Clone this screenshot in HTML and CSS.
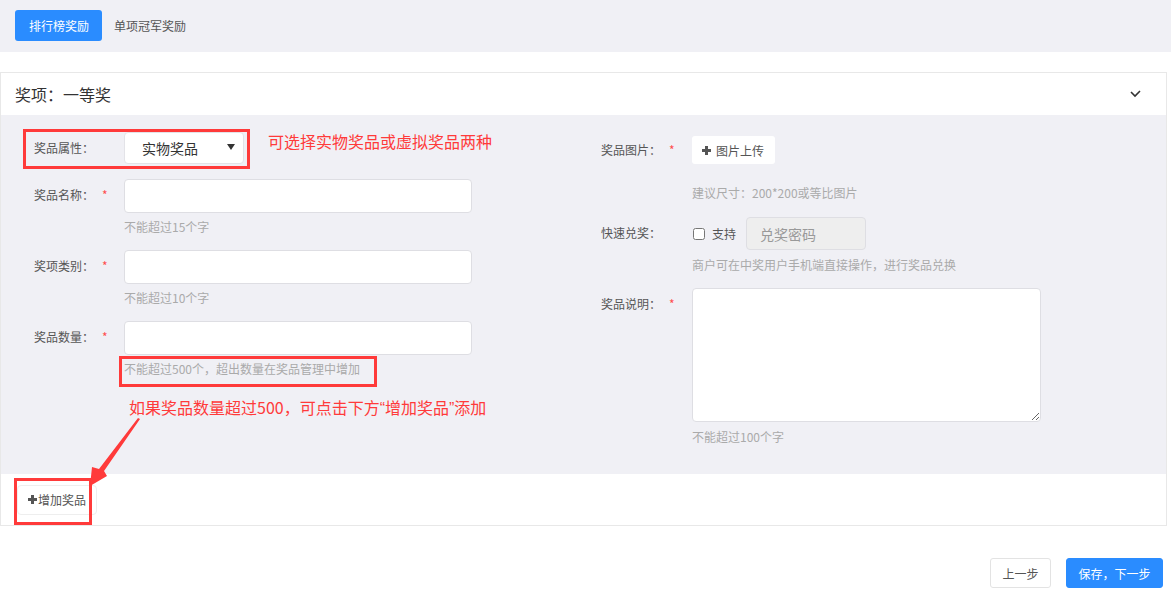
FILE: index.html
```html
<!DOCTYPE html>
<html lang="zh-CN">
<head>
    <meta charset="UTF-8">
    <title>奖品设置</title>
    <link rel="stylesheet" href="styles.css">
</head>
<body>
    <div class="topbar">
        <div class="tabs">
            <a class="tab active">排行榜奖励</a>
            <a class="tab">单项冠军奖励</a>
        </div>
    </div>

    <div class="panel">
        <div class="panel-head">
            <span>奖项：一等奖</span>
            <svg class="chevron" width="12" height="8" viewBox="0 0 12 8">
                <polyline points="1,2 5,6 10,1" fill="none" stroke="#333" stroke-width="1.6"/>
            </svg>
        </div>

        <div class="panel-body">
            <!-- left column -->
            <div class="col left">
                <div class="field">
                    <label class="label">奖品属性：</label>
                    <div class="select">
                        <span>实物奖品</span>
                        <i class="caret"></i>
                    </div>
                </div>

                <div class="field gap">
                    <label class="label">奖品名称：<em>*</em></label>
                    <input class="text-input" type="text">
                </div>
                <p class="help">不能超过15个字</p>

                <div class="field gap">
                    <label class="label">奖项类别：<em>*</em></label>
                    <input class="text-input" type="text">
                </div>
                <p class="help">不能超过10个字</p>

                <div class="field gap">
                    <label class="label">奖品数量：<em>*</em></label>
                    <input class="text-input" type="text">
                </div>
                <p class="help">不能超过500个，超出数量在奖品管理中增加</p>
            </div>

            <!-- right column -->
            <div class="col right">
                <div class="field first">
                    <label class="label short">奖品图片：<em>*</em></label>
                    <button class="upload-btn">
                        <svg width="9" height="9" viewBox="0 0 9 9"><path d="M3 0h3v3h3v3H6v3H3V6H0V3h3z" fill="#555"/></svg>
                        图片上传
                    </button>
                </div>
                <p class="help up">建议尺寸：200*200或等比图片</p>

                <div class="field gap-sm">
                    <label class="label">快速兑奖：</label>
                    <div class="quick">
                        <input type="checkbox" id="support">
                        <label for="support">支持</label>
                        <input class="code-input" type="text" placeholder="兑奖密码" disabled>
                    </div>
                </div>
                <p class="help tight">商户可在中奖用户手机端直接操作，进行奖品兑换</p>

                <div class="field gap">
                    <label class="label">奖品说明：<em>*</em></label>
                    <textarea class="desc"></textarea>
                </div>
                <p class="help tight">不能超过100个字</p>
            </div>
        </div>

        <div class="panel-foot">
            <button class="add-btn">
                <svg width="9" height="9" viewBox="0 0 9 9"><path d="M3 0h3v3h3v3H6v3H3V6H0V3h3z" fill="#555"/></svg>增加奖品
            </button>
        </div>

        <!-- annotations drawn over the form -->
        <div class="mark mark-type"></div>
        <div class="mark mark-count"></div>
        <div class="mark mark-add"></div>
        <p class="note note-type">可选择实物奖品或虚拟奖品两种</p>
        <p class="note note-count">如果奖品数量超过500，可点击下方<span class="q">“</span>增加奖品<span class="q">”</span>添加</p>
        <svg class="arrow" width="60" height="72" viewBox="0 0 60 72">
            <polygon points="54,0 56,1 20,53 23,58 6,68 8,49 15,51" fill="#ff3a3a"/>
        </svg>
    </div>

    <div class="actions">
        <button class="btn">上一步</button>
        <button class="btn primary">保存，下一步</button>
    </div>
</body>
</html>
```

FILE: styles.css
```css
*{
    margin: 0;
    padding: 0;
    box-sizing: border-box;
    font-family: "Noto Sans CJK SC", "Microsoft YaHei", sans-serif;
}
body{
    width: 1171px;
    background: #fff;
    color: #555;
    font-size: 12px;
}
.topbar{
    height: 52px;
    padding: 10px 15px;
    background: #f0f0f5;
}
.tabs{
    display: flex;
}
.tab{
    height: 31px;
    line-height: 31px;
    padding: 0 13px 0 12px;
    font-size: 12px;
    color: #555;
    border-radius: 3px;
}
.tab.active{
    color: #fff;
    background: #2a8cff;
    padding: 0 13px 0 14px;
}
.panel{
    position: relative;
    width: 1167px;
    margin-top: 20px;
    border: 1px solid #e8e8e8;
}
.panel-head{
    height: 42px;
    padding: 0 24px 0 14px;
    display: flex;
    align-items: center;
    justify-content: space-between;
    font-size: 16px;
    color: #333;
    background: #fff;
}
.panel-body{
    height: 359px;
    display: flex;
    padding: 17px 0 0 33px;
    background: #f0f0f5;
}
.col.left{
    width: 567px;
}
.col.right{
    flex: 1;
}
.field{
    display: flex;
    align-items: flex-start;
}
.field.gap{
    margin-top: 15px;
}
.col.left .field.gap:first-of-type{
    margin-top: 16px;
}
.field.first{
    margin-top: 4px;
}
.field.gap-sm{
    margin-top: 16px;
}
.label{
    width: 90px;
    flex-shrink: 0;
    line-height: 32px;
    font-size: 12px;
    color: #555;
}
.col.right .label{
    width: 91px;
}
.field.first .label{
    line-height: 28px;
}
.label em{
    font-style: normal;
    color: #ff4d4d;
    margin-left: 8px;
}
.select{
    width: 120px;
    height: 32px;
    display: flex;
    align-items: center;
    justify-content: space-between;
    padding: 0 8px 0 17px;
    background: #fff;
    border: 1px solid #e3e3e8;
    border-radius: 4px;
    font-size: 14px;
    color: #333;
}
.caret{
    width: 0;
    height: 0;
    margin-top: -2px;
    border-left: 4px solid transparent;
    border-right: 4px solid transparent;
    border-top: 6px solid #333;
}
.text-input{
    width: 348px;
    height: 34px;
    outline: none;
    background: #fff;
    border: 1px solid #dedee3;
    border-radius: 4px;
}
.help{
    margin: 6px 0 0 90px;
    height: 16px;
    line-height: 16px;
    font-size: 12px;
    color: #aaa;
}
.col.right .help{
    margin-left: 91px;
}
.help.up{
    margin-top: 21px;
}
.help.tight{
    margin-top: 7px;
}
.upload-btn{
    height: 28px;
    width: 83px;
    display: flex;
    align-items: center;
    gap: 5px;
    padding-left: 10px;
    border: none;
    border-radius: 3px;
    background: #fff;
    font-size: 12px;
    color: #555;
}
.quick{
    display: flex;
    align-items: center;
    height: 33px;
}
.quick input[type="checkbox"]{
    width: 12px;
    height: 12px;
    margin: 0 7px 0 1px;
}
.quick label{
    font-size: 12px;
    color: #555;
}
.code-input{
    width: 120px;
    height: 33px;
    margin-left: 10px;
    padding-left: 13px;
    font-size: 14px;
    background: #eee;
    border: 1px solid #dedee3;
    border-radius: 4px;
}
.code-input::placeholder{
    color: #999;
}
.desc{
    width: 349px;
    height: 134px;
    outline: none;
    background: #fff;
    border: 1px solid #dedee3;
    border-radius: 4px;
}
.panel-foot{
    height: 51px;
    display: flex;
    align-items: center;
    padding-left: 16px;
    background: #fff;
}
.add-btn{
    height: 30px;
    display: flex;
    align-items: center;
    gap: 1px;
    padding: 0 10px;
    background: #fff;
    border: 1px solid #eee;
    border-radius: 4px;
    font-size: 12px;
    color: #555;
}
.mark{
    position: absolute;
    border: 3px solid #ff3a3a;
}
.mark-type{
    left: 22px;
    top: 56px;
    width: 227px;
    height: 40px;
}
.mark-count{
    left: 118px;
    top: 283px;
    width: 258px;
    height: 31px;
}
.mark-add{
    left: 13px;
    top: 405px;
    width: 78px;
    height: 47px;
}
.note{
    position: absolute;
    font-size: 16px;
    line-height: 20px;
    color: #ff3a3a;
    white-space: nowrap;
}
.note .q{
    font-family: "Liberation Sans", sans-serif;
}
.note-type{
    left: 267px;
    top: 58px;
}
.note-count{
    left: 128px;
    top: 324px;
}
.arrow{
    position: absolute;
    left: 83px;
    top: 345px;
}
.actions{
    display: flex;
    justify-content: flex-end;
    gap: 15px;
    margin-top: 32px;
    padding-right: 8px;
}
.btn{
    height: 30px;
    padding: 0;
    white-space: nowrap;
    font-size: 12px;
    color: #555;
    background: #fff;
    border: 1px solid #e3e3e3;
    border-radius: 3px;
}
.btn:first-child{
    width: 61px;
}
.btn.primary{
    width: 97px;
    color: #fff;
    background: #2a8cff;
    border-color: #2a8cff;
}
```
